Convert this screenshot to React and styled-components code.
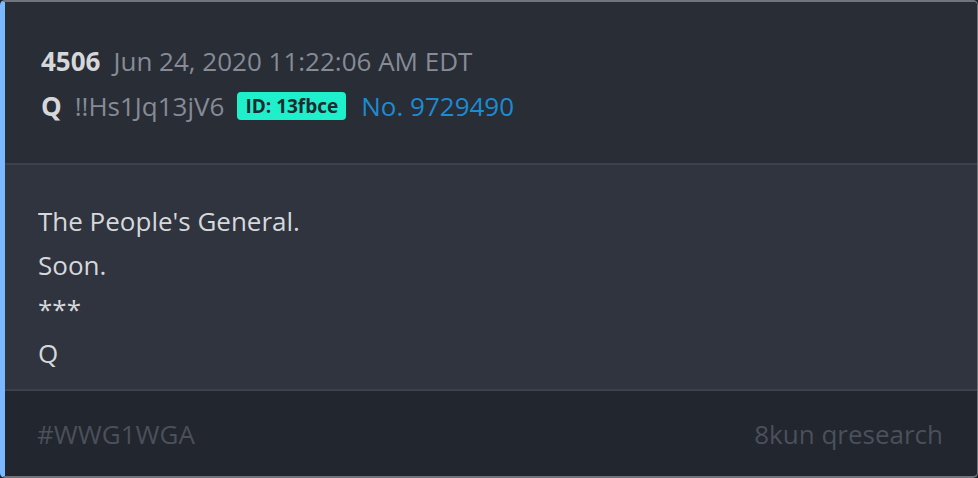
import React from "react";
import styled, { createGlobalStyle } from "styled-components";

const GlobalStyle = createGlobalStyle`
  html, body {
    margin: 0;
    padding: 0;
    background: #1e2128;
  }
  body {
    font-family: "Open Sans", "Noto Sans", sans-serif;
  }
`;

const Card = styled.div`
  width: 978px;
  height: 478px;
  box-sizing: border-box;
  display: flex;
  flex-direction: column;
  border: 1px solid #70747d;
  border-top-width: 2px;
  border-bottom-width: 2px;
  border-left: 5px solid #7ab8ff;
  border-radius: 5px;
  overflow: hidden;
  background: #22262e;
`;

const Header = styled.div`
  background: #292d36;
  padding: 41px 36px 39px 36px;
  border-bottom: 2px solid #3c414b;
  display: flex;
  flex-direction: column;
  gap: 9px;
`;

const MetaRow = styled.div`
  display: flex;
  align-items: center;
  gap: 13px;
  font-size: 26px;
  line-height: 36px;
`;

const Strong = styled.span`
  font-weight: 700;
  color: #d6d7da;
`;

const Muted = styled.span`
  color: #868b95;
`;

const Badge = styled.span`
  display: inline-flex;
  align-items: center;
  height: 28px;
  padding: 0 8px;
  margin-right: 2px;
  border-radius: 4px;
  background: #1ff0cc;
  color: #1d2a2f;
  font-size: 19px;
  font-weight: 700;
`;

const PostLink = styled.span`
  color: #1b8bd3;
`;

const Body = styled.div`
  flex: 1;
  background: #2f343e;
  padding: 38px 33px 0 33px;
  border-bottom: 2px solid #3c414b;
`;

const Line = styled.p`
  margin: 0 0 8px;
  font-size: 26px;
  line-height: 36px;
  color: #d6d8dc;
`;

const Footer = styled.div`
  display: flex;
  justify-content: space-between;
  align-items: center;
  padding: 25px 34px 24px 32px;
  font-size: 26px;
  line-height: 36px;
  color: #4b505a;
`;

const lines = ["The People's General.", "Soon.", "***", "Q"];

export default function App() {
  return (
    <>
      <GlobalStyle />
      <Card>
        <Header>
          <MetaRow>
            <Strong>4506</Strong>
            <Muted>Jun 24, 2020 11:22:06 AM EDT</Muted>
          </MetaRow>
          <MetaRow>
            <Strong>Q</Strong>
            <Muted>!!Hs1Jq13jV6</Muted>
            <Badge>ID: 13fbce</Badge>
            <PostLink>No. 9729490</PostLink>
          </MetaRow>
        </Header>
        <Body>
          {lines.map((text, i) => (
            <Line key={i}>{text}</Line>
          ))}
        </Body>
        <Footer>
          <span>#WWG1WGA</span>
          <span>8kun qresearch</span>
        </Footer>
      </Card>
    </>
  );
}
